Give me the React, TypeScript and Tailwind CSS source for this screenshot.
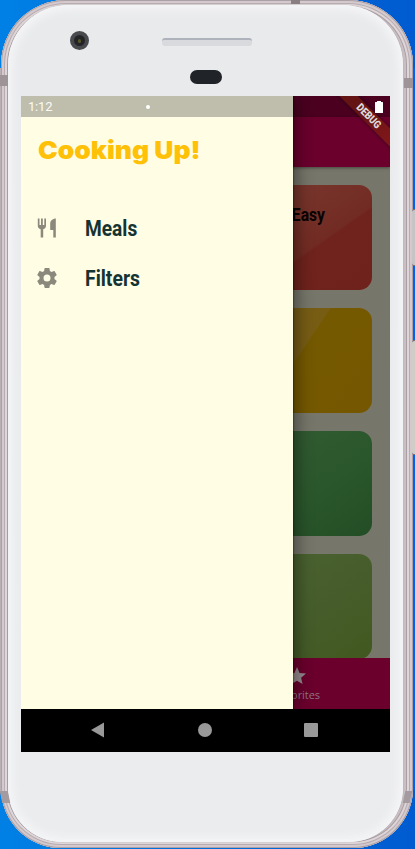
import React from 'react';

const cards = [
  { title: 'Quick & Easy', tone: 'bg-[linear-gradient(145deg,#77352c_55%,#722b23_75%,#70231d_76%,#6f211b)]' },
  { title: '', tone: 'bg-[linear-gradient(124deg,#775e18_40%,#775c14_72%,#755900_72.5%,#745700)]' },
  { title: '', tone: 'bg-[linear-gradient(145deg,#345c34_40%,#2b572c_75%,#234e25)]' },
  { title: '', tone: 'bg-[linear-gradient(145deg,#4b6332_40%,#465d2b_75%,#41591f)]' },
];

function Meals() {
  return (
    <svg className="h-5 w-5" viewBox="0 0 20 20" fill="#8a897b">
      <path d="M.8.5h1.700v6.500h1.500V.5h1.800v6.500h1.500V.5H9v7c0 2-1.200 3.400-2.800 3.800v8.200H3.700v-8.200C2 10.900.8 9.500.8 7.500Z" />
      <path d="M18.800.5v19h-2.500v-7.500h-3.100V5.500c0-2.600 2.500-5 5.600-5Z" />
    </svg>
  );
}

function Gear() {
  return (
    <svg className="h-6 w-6" viewBox="0 0 24 24" fill="#8a897b">
      <path d="M19.43 12.98c.04-.32.07-.64.07-.98s-.03-.66-.07-.98l2.11-1.65c.19-.15.24-.42.12-.64l-2-3.46c-.12-.22-.39-.3-.61-.22l-2.49 1c-.52-.4-1.08-.73-1.69-.98l-.38-2.65C14.46 2.18 14.25 2 14 2h-4c-.25 0-.46.18-.49.42l-.38 2.65c-.61.25-1.17.59-1.69.98l-2.49-1c-.23-.09-.49 0-.61.22l-2 3.46c-.13.22-.07.49.12.64l2.11 1.65c-.04.32-.07.65-.07.98s.03.66.07.98l-2.11 1.65c-.19.15-.24.42-.12.64l2 3.46c.12.22.39.3.61.22l2.49-1c.52.4 1.08.73 1.69.98l.38 2.65c.03.24.24.42.49.42h4c.25 0 .46-.18.49-.42l.38-2.65c.61-.25 1.17-.59 1.69-.98l2.49 1c.23.09.49 0 .61-.22l2-3.46c.12-.22.07-.49-.12-.64l-2.11-1.65ZM12 15.5A3.5 3.5 0 1 1 12 8.500a3.5 3.5 0 0 1 0 7Z" />
    </svg>
  );
}

function Drawer() {
  return (
    <aside className="absolute top-0 left-0 z-10 h-[613px] w-[272px] bg-[#fffde4] shadow-[1px_0_1px_rgba(0,0,0,0.25),4px_0_16px_rgba(0,0,0,0.4)]">
      <div className="flex h-[21px] items-center bg-[#bfbeac] pl-[7px] text-[13px] text-[#fafaf5]">
        <span className="w-[118px] tracking-[-0.2px]">1:12</span>
        <i className="h-1 w-1 rounded-full bg-white" />
      </div>
      <h1 className="mt-[15px] ml-[17px] h-9 w-fit origin-left scale-x-[1.06] whitespace-nowrap font-['Inter',sans-serif] text-[25px] leading-9 font-black tracking-[-0.02px] text-[#ffc107]">
        Cooking Up!
      </h1>
      <nav className="mt-[35px]">
        <a className="flex h-[50px] items-center pl-4">
          <span className="flex w-[48px]"><Meals /></span>
          <span className="origin-left scale-x-[0.87] text-[22px] font-bold text-[#143433]">Meals</span>
        </a>
        <a className="flex h-[50px] items-center pl-[14px]">
          <span className="flex w-[50px]"><Gear /></span>
          <span className="origin-left scale-x-[0.88] text-[22px] font-bold text-[#143433]">Filters</span>
        </a>
      </nav>
    </aside>
  );
}

function Screen() {
  return (
    <div className="relative mx-auto h-[656px] w-[369px] overflow-hidden bg-[#77766a]">
      <div className="flex h-[21px] items-center justify-end bg-[#4b0020] pr-[7px]">
        <svg className="relative z-10 h-3 w-2" viewBox="0 0 8 12" fill="white">
          <path d="M2 0h4v1h1.500q.5 0 .5.500v10q0 .5-.5.500h-7q-.5 0-.5-.500v-10Q0 1 .5 1H2Z" />
        </svg>
      </div>
      <header className="h-[50px] bg-[#6b002d] shadow-[0_1px_3px_rgba(0,0,0,0.4)]" />
      <main className="flex h-[491px] flex-col gap-[18px] overflow-hidden px-[18px] pt-[18px]">
        {cards.map((card, i) => (
          <section key={i} className={`h-[105px] shrink-0 rounded-[13px] pt-[18px] pr-[47px] text-right ${card.tone}`}>
            <h2 className="origin-right scale-x-[0.87] text-[18px] leading-6 font-bold text-[#080202]">{card.title}</h2>
          </section>
        ))}
      </main>
      <div className="absolute top-[562px] left-0 flex h-[51px] w-full justify-end bg-[#6b002d] pr-[48px]">
        <div className="flex w-[90px] flex-col items-center pt-[9px]">
          <svg className="h-[18px] w-[18px]" viewBox="2 2 20 20" fill="#978b90">
            <path d="m12 17.270 6.180 3.730-1.640-7.030L22 9.240l-7.190-.610L12 2 9.190 8.630 2 9.240l5.460 4.730L5.820 21Z" />
          </svg>
          <span className="font-['Open_Sans',sans-serif] text-[11px] leading-[19px] tracking-[-0.05px] text-[#907484]">Favorites</span>
        </div>
      </div>
      <footer className="absolute bottom-0 left-0 flex h-[43px] w-full items-center bg-black pb-px">
        <svg className="ml-[69px] h-4 w-[15px]" viewBox="0 0 15 16" fill="#999">
          <path d="M14 .5v15L1 8Z" />
        </svg>
        <i className="ml-[93px] h-[14px] w-[14px] rounded-full bg-[#999]" />
        <i className="ml-[92px] h-[14px] w-[14px] rounded-[1px] bg-[#999]" />
      </footer>
      <Drawer />
      <div className="absolute top-[14px] left-[293px] z-[5] flex h-[13px] w-[110px] rotate-45 items-center justify-center bg-linear-to-r from-[#651414] from-40% to-[#8f171d] text-[11px] leading-none font-black text-[#ded8d8] shadow-[0_0_4px_rgba(0,0,0,0.55)]">
        <span className="scale-x-[0.85]">DEBUG</span>
      </div>
    </div>
  );
}

export default function App() {
  return (
    <div className="relative h-[849px] w-[415px] overflow-hidden bg-[linear-gradient(90deg,#0080e5,#005bd0)] font-['Roboto',sans-serif]">
      <i className="absolute top-[68px] left-0 h-[723px] w-px bg-[#b8b0b4]" />
      <i className="absolute top-[68px] right-0 h-[722px] w-[2px] bg-[#0060ef]" />
      <i className="absolute top-[209px] right-0 h-[57px] w-[3px] rounded-l-sm border-y border-[#806f70] bg-[#c6c4c5]" />
      <i className="absolute top-[340px] right-0 h-[115px] w-[3px] rounded-l-sm border-y border-[#806f70] bg-[#d0cdc6]" />
      <div className="ml-px h-[848px] w-[412px] rounded-t-[65px] rounded-b-[60px] bg-[#c9bfc3] pt-[5px] pr-[10px] pb-[6px] pl-[7px] shadow-[inset_0_0_0_1px_#aaa0a6,inset_0_0_0_3px_#d4cacd,inset_0_0_0_4px_#b7acb1,inset_0_0_0_6px_#ded6d8,inset_0_0_0_7px_#aaa0a6]">
        <div className="h-full rounded-t-[60px] rounded-b-[54px] bg-linear-to-b from-[#e9eaec] to-[#ebecee] shadow-[inset_0_0_9px_5px_#f4f5f7,0_0_1px_#80777d]">
          <div className="relative h-[91px]">
            <i className="absolute top-[26px] left-[62px] flex h-[19px] w-[19px] items-center justify-center rounded-full border-[4px] border-[#494a4e] bg-[#222427]">
              <b className="h-[4px] w-[3px] rounded-full bg-[#585529]" />
            </i>
            <i className="absolute top-[33px] left-[154px] h-[8px] w-[90px] rounded-[3px] border-t-2 border-[#aeb2ba] bg-[#d8dade]" />
            <i className="absolute top-[65px] left-[182px] h-[14px] w-[32px] rounded-full bg-[#202327]" />
          </div>
          <div className="ml-[13px] w-[369px]"><Screen /></div>
        </div>
      </div>
      <i className="absolute top-[75px] left-0 h-[11px] w-2 bg-[#9e9397]" />
      <i className="absolute top-[78px] left-[404px] h-[10px] w-[9px] bg-[#9e9397]" />
      <i className="absolute top-0 left-[291px] h-1 w-[9px] bg-[#897f82]" />
      <i className="absolute top-[791px] left-[1px] h-[12px] w-[8px] skew-x-[12deg] bg-[#a49ba0]" />
      <i className="absolute top-[791px] left-[404px] h-[12px] w-[7px] -skew-x-[12deg] bg-[#a49ba0]" />
    </div>
  );
}
